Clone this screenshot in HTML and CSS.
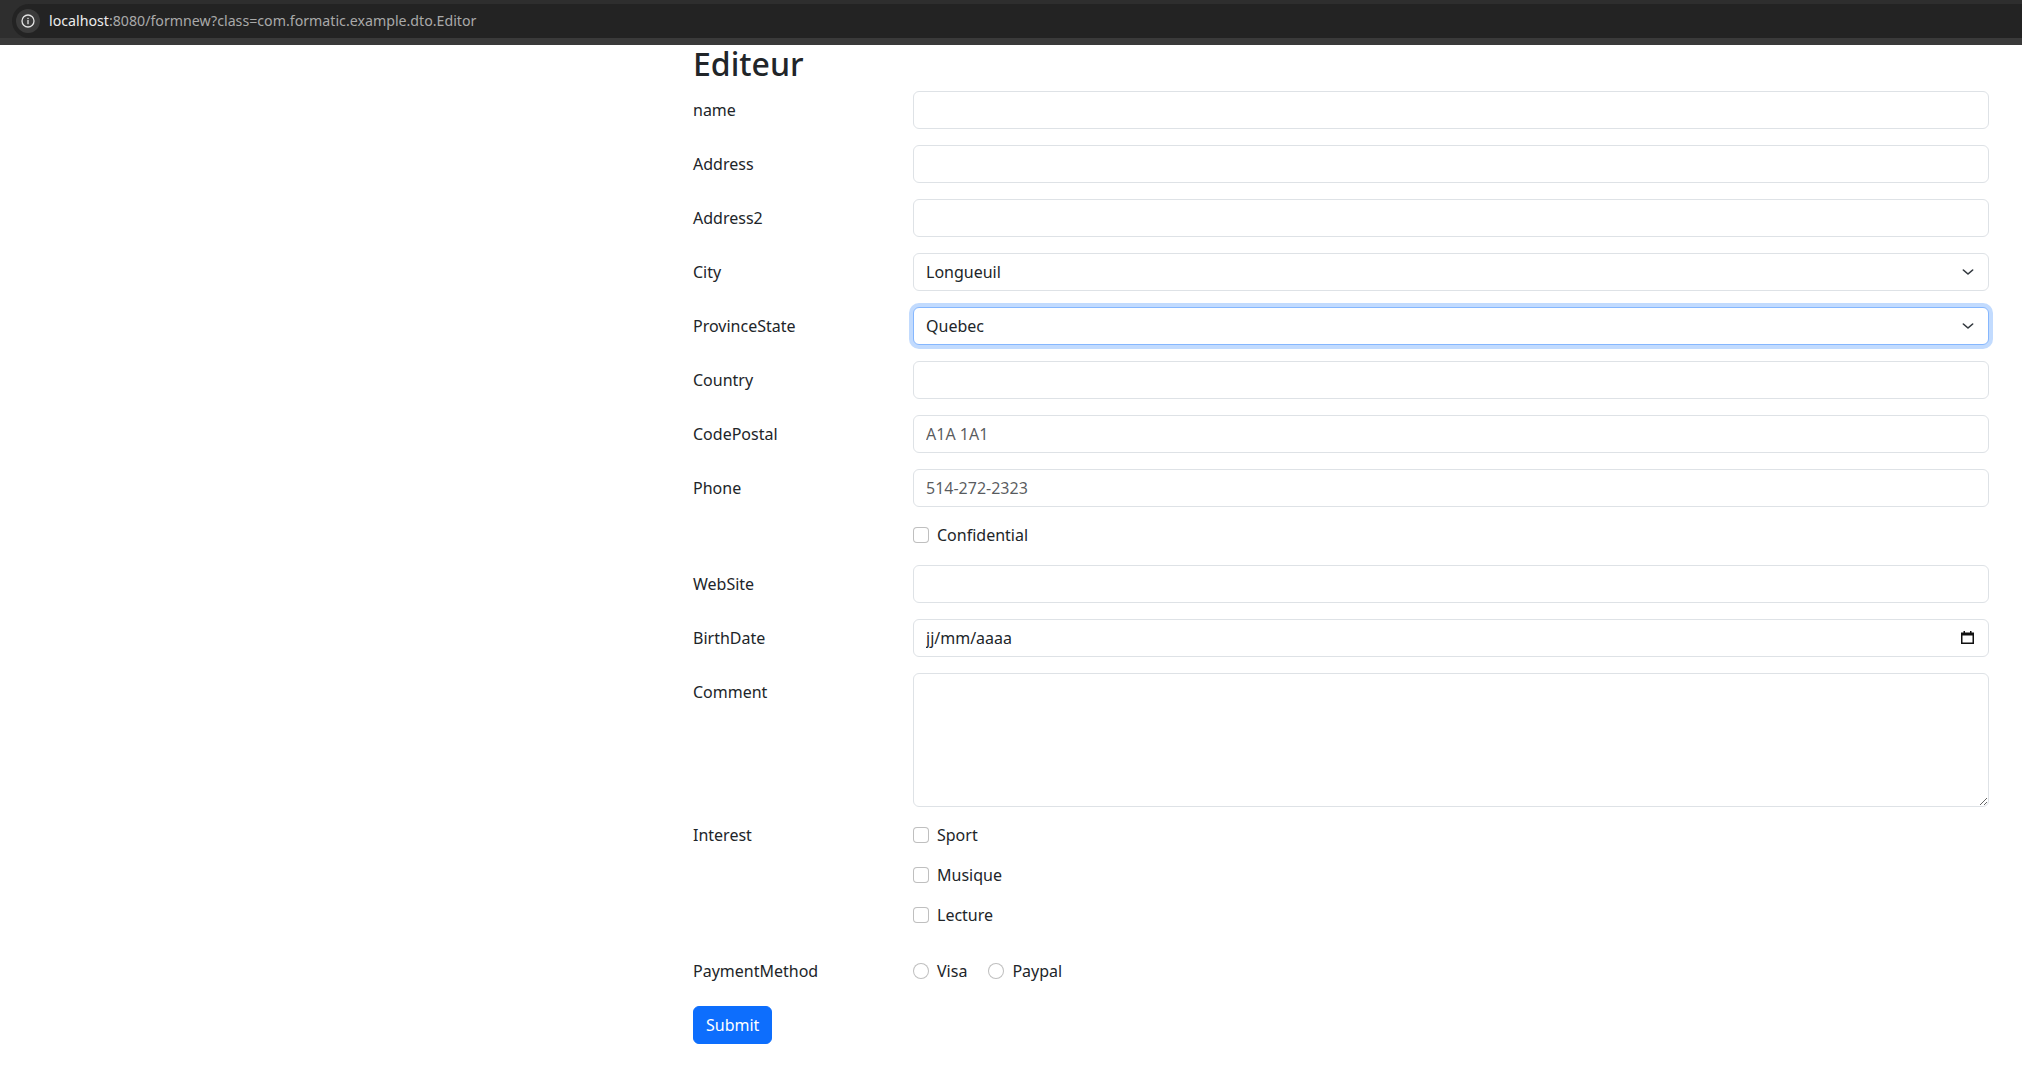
FILE: index.html
```html
<!DOCTYPE html>
<html lang="fr">
<head>
<meta charset="utf-8">
<title>Editeur</title>
<link rel="stylesheet" href="styles.css">
</head>
<body>
<header class="topbar">
  <div class="omnibox">
    <span class="info-btn">
      <svg width="14" height="14" viewBox="0 0 14 14" aria-hidden="true">
        <circle cx="7" cy="7" r="6" fill="none" stroke="#e3e3e3" stroke-width="1.3"/>
        <rect x="6.35" y="6" width="1.3" height="4.2" fill="#e3e3e3"/>
        <rect x="6.35" y="3.8" width="1.3" height="1.3" fill="#e3e3e3"/>
      </svg>
    </span>
    <span class="url"><span class="host">localhost</span>:8080/formnew?class=com.formatic.example.dto.Editor</span>
  </div>
</header>
<main class="main">
  <h2 class="title">Editeur</h2>
  <form class="form">
    <div class="row">
      <label class="lbl">name</label>
      <input class="ctl" type="text">
    </div>
    <div class="row">
      <label class="lbl">Address</label>
      <input class="ctl" type="text">
    </div>
    <div class="row">
      <label class="lbl">Address2</label>
      <input class="ctl" type="text">
    </div>
    <div class="row">
      <label class="lbl">City</label>
      <div class="select-wrap">
        <select class="ctl sel"><option>Longueuil</option></select>
        <svg class="chev" width="16" height="16" viewBox="0 0 16 16" aria-hidden="true"><path d="M2 5l6 6 6-6" fill="none" stroke="#343a40" stroke-width="2" stroke-linecap="round" stroke-linejoin="round"/></svg>
      </div>
    </div>
    <div class="row">
      <label class="lbl">ProvinceState</label>
      <div class="select-wrap">
        <select class="ctl sel focused"><option>Quebec</option></select>
        <svg class="chev" width="16" height="16" viewBox="0 0 16 16" aria-hidden="true"><path d="M2 5l6 6 6-6" fill="none" stroke="#343a40" stroke-width="2" stroke-linecap="round" stroke-linejoin="round"/></svg>
      </div>
    </div>
    <div class="row">
      <label class="lbl">Country</label>
      <input class="ctl" type="text">
    </div>
    <div class="row">
      <label class="lbl">CodePostal</label>
      <input class="ctl" type="text" placeholder="A1A 1A1">
    </div>
    <div class="row">
      <label class="lbl">Phone</label>
      <input class="ctl" type="text" placeholder="514-272-2323">
    </div>
    <div class="row">
      <span class="lbl-empty"></span>
      <div class="check"><span class="box"></span><span class="check-lbl">Confidential</span></div>
    </div>
    <div class="row">
      <label class="lbl">WebSite</label>
      <input class="ctl" type="text">
    </div>
    <div class="row">
      <label class="lbl">BirthDate</label>
      <div class="date-wrap">
        <input class="ctl" type="text" value="jj/mm/aaaa">
        <svg class="cal" width="13" height="13" viewBox="0 0 13 13" aria-hidden="true">
          <rect x="0" y="1.5" width="13" height="11.5" fill="#111"/>
          <rect x="1.5" y="4.5" width="10" height="7" fill="#fff"/>
          <rect x="2.5" y="0" width="1.5" height="2" fill="#111"/>
          <rect x="9" y="0" width="1.5" height="2" fill="#111"/>
        </svg>
      </div>
    </div>
    <div class="row">
      <label class="lbl">Comment</label>
      <textarea class="ctl area" rows="5"></textarea>
    </div>
    <div class="row">
      <label class="lbl lbl-plain">Interest</label>
      <div class="checks">
        <div class="check"><span class="box"></span><span class="check-lbl">Sport</span></div>
        <div class="check"><span class="box"></span><span class="check-lbl">Musique</span></div>
        <div class="check"><span class="box"></span><span class="check-lbl">Lecture</span></div>
      </div>
    </div>
    <div class="row row-pay">
      <label class="lbl lbl-plain">PaymentMethod</label>
      <div class="radios">
        <div class="check"><span class="box round"></span><span class="check-lbl">Visa</span></div>
        <div class="check"><span class="box round"></span><span class="check-lbl">Paypal</span></div>
      </div>
    </div>
    <button class="btn" type="button">Submit</button>
  </form>
</main>
</body>
</html>
```

FILE: styles.css
```css
* { box-sizing: border-box; }

html, body {
  margin: 0;
  padding: 0;
  background: #fff;
}

body {
  font-family: "Noto Sans", "Liberation Sans", sans-serif;
  font-size: 16px;
  line-height: 1.5;
  color: #212529;
}

/* Browser address bar */
.topbar {
  height: 45px;
  background: #2e2e2e;
  padding-top: 4px;
  border-bottom: 7px solid #3a3a3a;
}

.omnibox {
  margin-left: 12px;
  height: 34px;
  background: #232323;
  border-radius: 17px 0 0 17px;
  display: flex;
  align-items: center;
  gap: 9px;
  padding-left: 4px;
}

.info-btn {
  width: 24px;
  height: 24px;
  border-radius: 50%;
  background: #3b3b3b;
  display: flex;
  align-items: center;
  justify-content: center;
}

.url {
  font-size: 14.2px;
  color: #a9a9a9;
  white-space: nowrap;
}

.host { color: #ececec; }

/* Page */
.main {
  margin-left: 693px;
  width: 1296px;
}

.title {
  margin: 0 0 8px;
  font-size: 32px;
  font-weight: 500;
  line-height: 1.2;
}

.row {
  display: grid;
  grid-template-columns: 196px 1076px;
  column-gap: 24px;
  margin-bottom: 16px;
  align-items: start;
}

.lbl {
  padding-top: 7px;
  padding-bottom: 7px;
}

.lbl-plain { padding-top: 0; padding-bottom: 0; }

.ctl {
  display: block;
  width: 100%;
  height: 38px;
  padding: 6px 12px;
  font-family: inherit;
  font-size: 16px;
  line-height: 1.5;
  color: #212529;
  background: #fff;
  border: 1px solid #dee2e6;
  border-radius: 6px;
  outline: none;
  margin: 0;
}

.ctl::placeholder { color: rgba(33, 37, 41, 0.75); }

.select-wrap, .date-wrap { position: relative; }

.sel {
  appearance: none;
  -webkit-appearance: none;
  padding-right: 36px;
}

.sel.focused {
  border-color: #86b7fe;
  box-shadow: 0 0 0 4px rgba(13, 110, 253, 0.25);
}

.chev {
  position: absolute;
  right: 13px;
  top: 11px;
  width: 16px;
  height: 16px;
  pointer-events: none;
  transform: scale(0.78, 0.7);
}

.cal {
  position: absolute;
  right: 15px;
  top: 12px;
}

.area {
  height: 134px;
  resize: vertical;
}

.check {
  display: flex;
  align-items: flex-start;
  min-height: 24px;
  margin-bottom: 2px;
}

.box {
  width: 16px;
  height: 16px;
  margin-top: 4px;
  margin-right: 8px;
  border: 1px solid rgba(0, 0, 0, 0.25);
  border-radius: 4px;
  background: #fff;
  flex: none;
}

.box.round { border-radius: 50%; }

.checks .check { margin-bottom: 16px; }

.row-pay { margin-bottom: 23px; }

.radios {
  display: flex;
  gap: 21px;
}

.radios .check { margin-bottom: 0; }

.btn {
  display: inline-block;
  height: 38px;
  padding: 6px 12px;
  font-family: inherit;
  font-size: 16px;
  line-height: 1.5;
  color: #fff;
  background: #0d6efd;
  border: 1px solid #0d6efd;
  border-radius: 6px;
}
```
